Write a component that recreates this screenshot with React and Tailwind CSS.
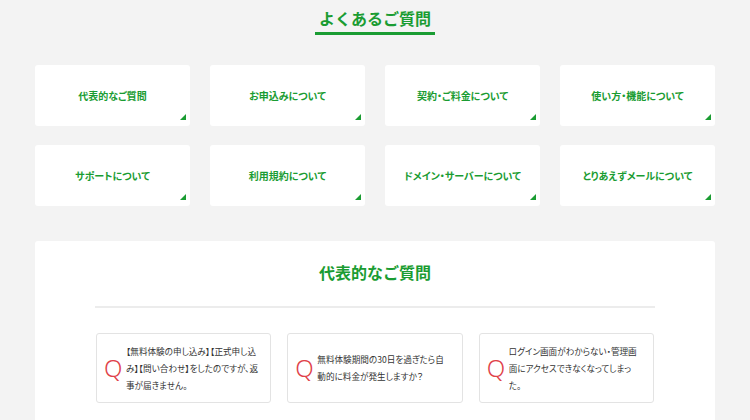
const categories = [
  '代表的なご質問',
  'お申込みについて',
  '契約・ご料金について',
  '使い方・機能について',
  'サポートについて',
  '利用規約について',
  'ドメイン・サーバーについて',
  'とりあえずメールについて',
]

const questions = [
  ['【無料体験の申し込み】【正式申し込', 'み】【問い合わせ】をしたのですが、返', '事が届きません。'],
  ['無料体験期間の30日を過ぎたら自', '動的に料金が発生しますか？'],
  ['ログイン画面がわからない・管理画', '面にアクセスできなくなってしまっ', 'た。'],
]

export default function App() {
  return (
    <div
      className="w-[750px] h-[420px] overflow-hidden bg-[#f3f3f3]"
      style={{ fontFamily: '"Noto Sans CJK JP", "Noto Sans", sans-serif' }}
    >
      {/* 見出し */}
      <div className="flex justify-center pt-[9px]">
        <h1 className="px-[4px] pb-[4px] border-b-[3px] border-[#1a9c32] text-[16px] leading-[19px] font-bold text-[#1a9c32]">
          よくあるご質問
        </h1>
      </div>

      {/* カテゴリ */}
      <div className="grid grid-cols-4 gap-x-5 gap-y-[19px] px-[35px] mt-[30px]">
        {categories.map(c => (
          <div key={c} className="relative h-[61px] bg-white rounded-[3px] flex items-center justify-center">
            <span className="text-[10px] font-bold text-[#1a9c32] [font-feature-settings:'palt']">{c}</span>
            <div className="absolute right-[4px] bottom-[6px] w-0 h-0 border-l-[6px] border-l-transparent border-b-[6px] border-b-[#1a9c32]" />
          </div>
        ))}
      </div>

      {/* 代表的なご質問 */}
      <div className="mx-[35px] mt-[35px] bg-white rounded-[3px] pt-[21px] pb-10">
        <h2 className="text-center text-[16px] leading-[20px] font-bold text-[#1a9c32]">代表的なご質問</h2>
        <div className="mx-[60px] mt-[24px] h-[2px] bg-[#ececec]" />
        <div className="mx-[61px] mt-[25px] grid grid-cols-3 gap-[16px]">
          {questions.map((q, i) => (
            <div key={i} className="h-[70px] border border-[#e3e3e3] rounded-[3px] flex items-center pl-[7px] pr-2">
              <span
                className="w-[22px] shrink-0 text-[24px] leading-none font-light text-[#e0424a]"
                style={{ fontFamily: '"Noto Sans", sans-serif' }}
              >
                Q
              </span>
              <p className="text-[8.6px] leading-[17px] text-[#333] [font-feature-settings:'palt']">
                {q.map((line, j) => (
                  <span key={j} className="block whitespace-nowrap">{line}</span>
                ))}
              </p>
            </div>
          ))}
        </div>
      </div>
    </div>
  )
}
